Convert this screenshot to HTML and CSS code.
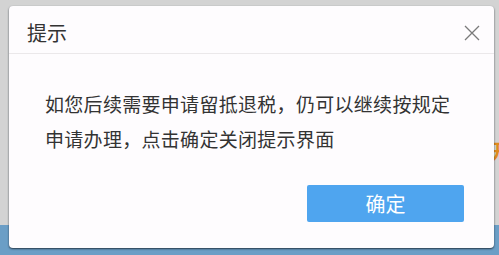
FILE: index.html
```html
<!DOCTYPE html>
<html lang="zh-CN">
<head>
    <meta charset="UTF-8">
    <title>提示</title>
    <link rel="stylesheet" href="styles.css">
</head>
<body>

<div class="page">
    <div class="page-main">
        <span class="page-link">开</span>
    </div>
    <div class="page-footer"></div>
</div>

<!-- 提示弹窗 -->
<div class="dialog">
    <div class="dialog-header">
        <span class="dialog-title">提示</span>
        <svg class="dialog-close" width="16" height="16" viewBox="0 0 16 16">
            <path d="M1 1 L15 15 M15 1 L1 15" stroke="#7a7a7a" stroke-width="1.3" fill="none"/>
        </svg>
    </div>
    <div class="dialog-body">
        如您后续需要申请留抵退税，仍可以继续按规定<br>申请办理，点击确定关闭提示界面
    </div>
    <div class="dialog-footer">
        <button class="btn-ok">确定</button>
    </div>
</div>

</body>
</html>
```

FILE: styles.css
```css
body {
    margin: 0;
    font-family: "Noto Sans CJK SC", "Liberation Sans", sans-serif;
    overflow: hidden;
}
.page {
    height: 255px;
    display: flex;
    flex-direction: column;
    background-color: #d3d3d3;
}
.page-main {
    flex: 1;
    display: flex;
    justify-content: flex-end;
    padding-top: 137px;
}
.page-link {
    color: #e08a1e;
    font-size: 20px;
    font-weight: bold;
    line-height: 28px;
    margin-right: -12px;
    height: 28px;
}
.page-footer {
    height: 30px;
    background-color: #6b9ec6;
}
.dialog {
    position: absolute;
    left: 9px;
    top: 6px;
    width: 485px;
    height: 242px;
    background-color: #fefcfe;
    border-radius: 4px;
    box-shadow: 0 1px 2px rgba(20, 30, 40, 0.8);
    display: flex;
    flex-direction: column;
}
.dialog-header {
    height: 47px;
    border-bottom: 1px solid #ebe8ea;
    display: flex;
    align-items: center;
    justify-content: space-between;
    padding: 0 14px 0 18px;
}
.dialog-title {
    font-size: 20px;
    color: #333;
    margin-top: 6px;
}
.dialog-close {
    margin-top: 6px;
}
.dialog-body {
    padding: 32px 20px 0 36px;
    font-size: 19px;
    letter-spacing: 0.3px;
    line-height: 35px;
    color: #333;
    height: 70px;
    white-space: nowrap;
}
.dialog-footer {
    display: flex;
    justify-content: flex-end;
    padding: 29px 30px 0 0;
}
.btn-ok {
    width: 157px;
    height: 37px;
    border: none;
    border-radius: 2px;
    background-color: #4fa5ef;
    color: #fff;
    font-family: inherit;
    font-size: 20px;
    cursor: pointer;
}
```
